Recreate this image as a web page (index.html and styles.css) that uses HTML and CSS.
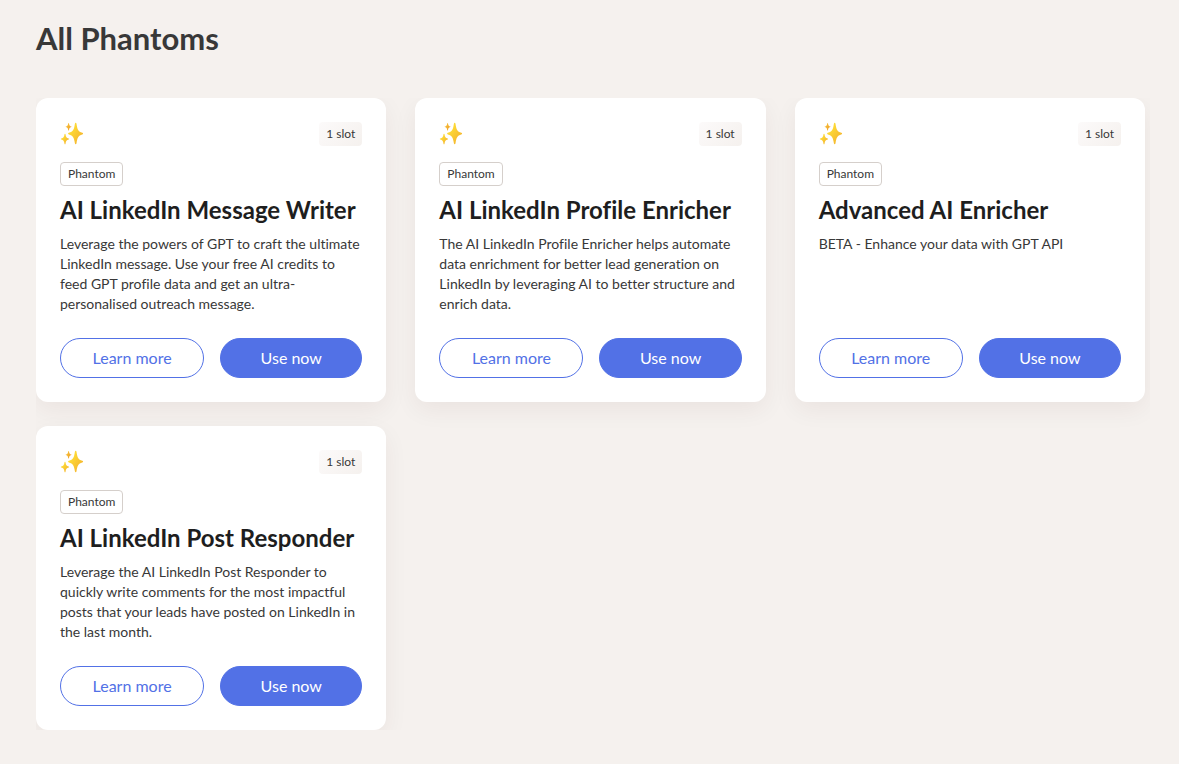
FILE: index.html
```html
<!DOCTYPE html>
<html lang="en">
<head>
    <meta charset="UTF-8">
    <meta name="viewport" content="width=device-width, initial-scale=1.0">
    <title>All Phantoms</title>
    <link rel="stylesheet" href="styles.css">
</head>
<body>
    <!-- Shared sparkles icon -->
    <svg class="sprite" width="0" height="0" aria-hidden="true">
        <defs>
            <linearGradient id="gold" x1="0" y1="0" x2="1" y2="1">
                <stop offset="0.3" stop-color="#fdd835"/>
                <stop offset="1" stop-color="#f2ab2c"/>
            </linearGradient>
            <linearGradient id="amber" x1="0" y1="0" x2="1" y2="1">
                <stop offset="0" stop-color="#f9c83a"/>
                <stop offset="1" stop-color="#ee9a26"/>
            </linearGradient>
        </defs>
        <symbol id="sparkles" viewBox="0 0 24 24">
            <path fill="url(#gold)" d="M15.7 .8Q16.3 .8 16.5 1.8C17.4 7.7 18.2 9.6 22.3 10.8Q23.1 11.1 23.1 11.6Q23.1 12.1 22.3 12.4C18.2 13.6 17.4 15.3 16.5 21.3Q16.3 22.2 15.7 22.2Q15.1 22.2 14.9 21.3C14 15.3 13.1 13.6 8.9 12.4Q8.1 12.1 8.1 11.6Q8.1 11.1 8.9 10.8C13.1 9.6 14 7.7 14.9 1.8Q15.1 .8 15.7 .8Z"/>
            <path fill="url(#gold)" d="M5 11.7Q5.4 11.7 5.5 12.3C5.9 15.2 6.6 16 8.6 16.6Q9.1 16.8 9.1 17.1Q9.1 17.4 8.6 17.5C6.6 18.1 5.9 18.9 5.5 21.7Q5.4 22.2 5 22.2Q4.6 22.2 4.5 21.7C4.1 18.9 3.4 18.1 1.3 17.5Q.8 17.4 .8 17.1Q.8 16.8 1.3 16.6C3.4 16 4.1 15.2 4.5 12.3Q4.6 11.7 5 11.7Z"/>
            <path fill="url(#amber)" d="M8.6 .9Q8.9 .9 9 1.4C9.3 3.4 9.7 4 11.2 4.4Q11.6 4.5 11.6 4.7Q11.6 4.9 11.2 5C9.7 5.5 9.3 6.1 9 8Q8.9 8.5 8.6 8.5Q8.3 8.5 8.2 8C7.9 6.1 7.5 5.5 6 5Q5.6 4.9 5.6 4.7Q5.6 4.5 6 4.4C7.5 4 7.9 3.4 8.2 1.4Q8.3 .9 8.6 .9Z"/>
        </symbol>
    </svg>

    <main class="page">
        <h1 class="page-title">All Phantoms</h1>

        <div class="card-grid">
            <article class="card">
                <div class="card-top">
                    <svg class="card-icon" aria-hidden="true"><use href="#sparkles"/></svg>
                    <span class="slot-badge">1 slot</span>
                </div>
                <span class="type-tag">Phantom</span>
                <h2 class="card-title">AI LinkedIn Message Writer</h2>
                <p class="card-text">Leverage the powers of GPT to craft the ultimate LinkedIn message. Use your free AI credits to feed GPT profile data and get an ultra-personalised outreach message.</p>
                <div class="card-actions">
                    <button class="btn btn-outline" type="button">Learn more</button>
                    <button class="btn btn-primary" type="button">Use now</button>
                </div>
            </article>

            <article class="card">
                <div class="card-top">
                    <svg class="card-icon" aria-hidden="true"><use href="#sparkles"/></svg>
                    <span class="slot-badge">1 slot</span>
                </div>
                <span class="type-tag">Phantom</span>
                <h2 class="card-title">AI LinkedIn Profile Enricher</h2>
                <p class="card-text">The AI LinkedIn Profile Enricher helps automate data enrichment for better lead generation on LinkedIn by leveraging AI to better structure and enrich data.</p>
                <div class="card-actions">
                    <button class="btn btn-outline" type="button">Learn more</button>
                    <button class="btn btn-primary" type="button">Use now</button>
                </div>
            </article>

            <article class="card">
                <div class="card-top">
                    <svg class="card-icon" aria-hidden="true"><use href="#sparkles"/></svg>
                    <span class="slot-badge">1 slot</span>
                </div>
                <span class="type-tag">Phantom</span>
                <h2 class="card-title">Advanced AI Enricher</h2>
                <p class="card-text">BETA - Enhance your data with GPT API</p>
                <div class="card-actions">
                    <button class="btn btn-outline" type="button">Learn more</button>
                    <button class="btn btn-primary" type="button">Use now</button>
                </div>
            </article>

            <article class="card">
                <div class="card-top">
                    <svg class="card-icon" aria-hidden="true"><use href="#sparkles"/></svg>
                    <span class="slot-badge">1 slot</span>
                </div>
                <span class="type-tag">Phantom</span>
                <h2 class="card-title">AI LinkedIn Post Responder</h2>
                <p class="card-text">Leverage the AI LinkedIn Post Responder to quickly write comments for the most impactful posts that your leads have posted on LinkedIn in the last month.</p>
                <div class="card-actions">
                    <button class="btn btn-outline" type="button">Learn more</button>
                    <button class="btn btn-primary" type="button">Use now</button>
                </div>
            </article>
        </div>
    </main>
</body>
</html>
```
FILE: styles.css
```css
* {
    margin: 0;
    padding: 0;
    box-sizing: border-box;
}

body {
    font-family: Lato, "Liberation Sans", sans-serif;
    font-variant-ligatures: none;
    background: #f5f1ee;
    color: #383838;
}

.sprite {
    display: block;
}

.page {
    padding: 18px 29px 34px 36px;
}

.page-title {
    font-size: 31px;
    line-height: 40px;
    font-weight: 700;
    margin-bottom: 40px;
}

/* Cards */
.card-grid {
    display: grid;
    grid-template-columns: repeat(3, 1fr);
    gap: 24px 29px;
    padding-right: 5px;
    overflow: hidden;
}

.card {
    display: flex;
    flex-direction: column;
    padding: 24px;
    background: #fff;
    border-radius: 12px;
    box-shadow: 0 8px 24px rgba(70, 20, 20, 0.06);
}

.card-top {
    display: flex;
    align-items: center;
    justify-content: space-between;
    margin-bottom: 16px;
}

.card-icon {
    width: 24px;
    height: 24px;
}

.slot-badge {
    padding: 0 7px;
    border-radius: 4px;
    background: linear-gradient(135deg, #fcfafa, #f5f1ee);
    font-size: 12px;
    line-height: 24px;
}

.type-tag {
    align-self: flex-start;
    padding: 0 7px;
    border: 1px solid #d5cfcb;
    border-radius: 4px;
    font-size: 12px;
    line-height: 22px;
    margin-bottom: 8px;
}

.card-title {
    font-size: 24px;
    line-height: 32px;
    font-weight: 700;
    color: #1e1e1e;
    margin-bottom: 8px;
}

.card-text {
    flex: 1;
    font-size: 14px;
    line-height: 20px;
    margin-bottom: 24px;
}

/* Buttons */
.card-actions {
    display: grid;
    grid-template-columns: 72fr 71fr;
    gap: 16px;
}

.btn {
    height: 40px;
    padding-bottom: 2px;
    border: 1px solid #5271e6;
    border-radius: 20px;
    font-family: inherit;
    font-size: 16px;
    cursor: pointer;
}

.btn-outline {
    background: #fff;
    color: #5271e6;
}

.btn-primary {
    background: #5271e6;
    color: #fff;
}
```
